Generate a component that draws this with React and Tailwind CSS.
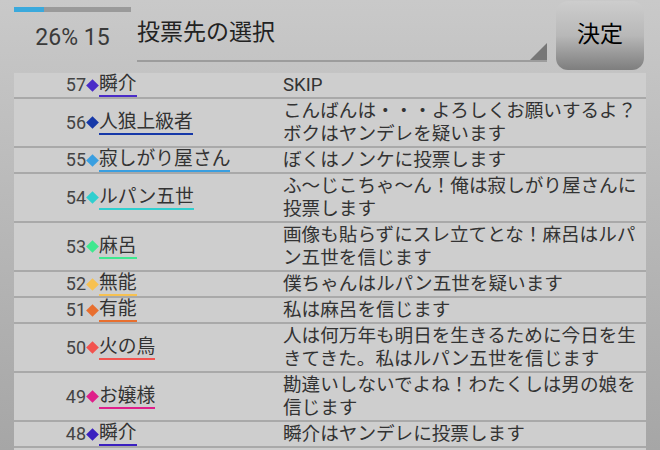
import React from 'react';

const rows = [
    { no: 57, name: '瞬介', dot: 'bg-[#4a2cc8]', line: 'border-[#4a2cc8]', text: ['SKIP'] },
    { no: 56, name: '人狼上級者', dot: 'bg-[#1638a8]', line: 'border-[#1638a8]', text: ['こんばんは・・・よろしくお願いするよ？', 'ボクはヤンデレを疑います'] },
    { no: 55, name: '寂しがり屋さん', dot: 'bg-[#3a9fe0]', line: 'border-[#3a9fe0]', text: ['ぼくはノンケに投票します'] },
    { no: 54, name: 'ルパン五世', dot: 'bg-[#2fcfcf]', line: 'border-[#2fcfcf]', text: ['ふ〜じこちゃ〜ん！俺は寂しがり屋さんに', '投票します'] },
    { no: 53, name: '麻呂', dot: 'bg-[#3fe88f]', line: 'border-[#3fe88f]', text: ['画像も貼らずにスレ立てとな！麻呂はルパ', 'ン五世を信じます'] },
    { no: 52, name: '無能', dot: 'bg-[#f7c150]', line: 'border-[#f7c150]', text: ['僕ちゃんはルパン五世を疑います'] },
    { no: 51, name: '有能', dot: 'bg-[#e86f2f]', line: 'border-[#e86f2f]', text: ['私は麻呂を信じます'] },
    { no: 50, name: '火の鳥', dot: 'bg-[#f2534f]', line: 'border-[#f2534f]', text: ['人は何万年も明日を生きるために今日を生', 'きてきた。私はルパン五世を信じます'] },
    { no: 49, name: 'お嬢様', dot: 'bg-[#df1f8a]', line: 'border-[#df1f8a]', text: ['勘違いしないでよね！わたくしは男の娘を', '信じます'] },
    { no: 48, name: '瞬介', dot: 'bg-[#3a20c0]', line: 'border-[#3a20c0]', text: ['瞬介はヤンデレに投票します'] },
];

const font = { fontFamily: 'Roboto, "Noto Sans CJK JP", sans-serif' };

const App = () => {
    return (
        <div className="h-[450px] w-full overflow-hidden bg-linear-to-b from-[#c9c9c9] to-[#a6a6a6] text-[#333]" style={font}>
            {/* Header */}
            <div className="flex h-[72px]">
                <div className="ml-[14px] w-[117px] pt-[7px]">
                    <div className="h-[5px] bg-[#9a9a9a]">
                        <div className="h-full w-[26%] bg-[#3aa9dc]" />
                    </div>
                    <div className="mt-[13px] text-center text-[23px] leading-[26px] text-[#3a3a3a]">26% 15</div>
                </div>

                <div className="ml-[6px] w-[410px] relative border-b-2 border-[#9c9c9c] h-[62px]">
                    <div className="pt-[19px] text-[23px] leading-[28px] text-[#222]">投票先の選択</div>
                    <svg className="absolute right-0 bottom-0" width="17" height="17" viewBox="0 0 17 17">
                        <polygon points="17,0 17,17 0,17" fill="#777" />
                    </svg>
                </div>

                <div className="ml-[9px] mt-[1px] w-[88px] h-[69px] rounded-[12px] bg-linear-to-b from-[#cdcdcd] via-[#b8b8b8] to-[#7e7e7e] flex items-center justify-center text-[23px] text-black">
                    決定
                </div>
            </div>

            {/* Vote list */}
            <div className="mx-[14px] w-[632px] border-t border-[#c4c4c4]">
                {rows.map((r, i) => (
                    <div key={i} className="flex border-b-2 border-[#a9a9a9] bg-[#cecece]">
                        <div className="w-[269px] flex items-center">
                            <span className="w-[72px] text-right text-[18px] leading-[22px] text-[#444]">{r.no}</span>
                            <span className={`mx-[2px] w-[9px] h-[9px] rotate-45 ${r.dot}`} />
                            <span className={`border-b-2 text-[18.8px] leading-[22px] text-[#333] ${r.line}`}>{r.name}</span>
                        </div>
                        <div className="flex-1 pt-[1px] text-[18.6px] leading-[23px] text-[#333]">
                            {r.text.map((t, j) => (
                                <div key={j}>{t}</div>
                            ))}
                        </div>
                    </div>
                ))}
                <div className="h-[26px] border-b-2 border-[#a9a9a9] bg-[#cecece]" />
            </div>
        </div>
    );
};

export default App;
